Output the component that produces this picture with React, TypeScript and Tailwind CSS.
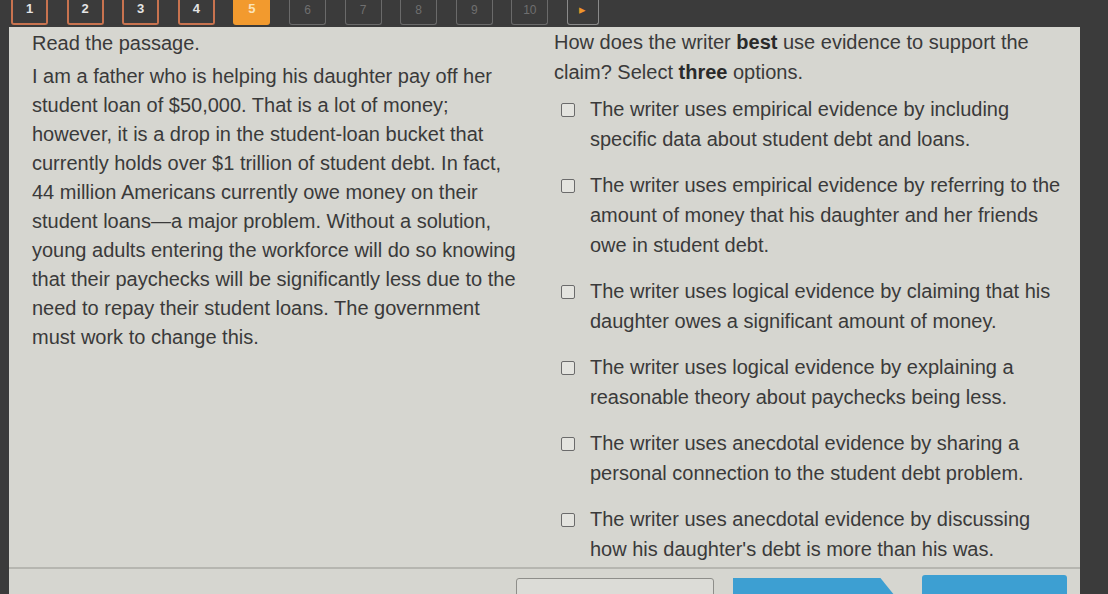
import React from "react";

const passage = [
  "I am a father who is helping his daughter pay off her",
  "student loan of $50,000. That is a lot of money;",
  "however, it is a drop in the student-loan bucket that",
  "currently holds over $1 trillion of student debt. In fact,",
  "44 million Americans currently owe money on their",
  "student loans\u2014a major problem. Without a solution,",
  "young adults entering the workforce will do so knowing",
  "that their paychecks will be significantly less due to the",
  "need to repay their student loans. The government",
  "must work to change this.",
];

const options: string[][] = [
  ["The writer uses empirical evidence by including", "specific data about student debt and loans."],
  [
    "The writer uses empirical evidence by referring to the",
    "amount of money that his daughter and her friends",
    "owe in student debt.",
  ],
  ["The writer uses logical evidence by claiming that his", "daughter owes a significant amount of money."],
  ["The writer uses logical evidence by explaining a", "reasonable theory about paychecks being less."],
  ["The writer uses anecdotal evidence by sharing a", "personal connection to the student debt problem."],
  ["The writer uses anecdotal evidence by discussing", "how his daughter's debt is more than his was."],
];

const PageBox: React.FC<{ n: number; state: "done" | "current" | "todo" }> = ({ n, state }) => {
  if (state === "current") {
    return (
      <div className="flex h-[25px] w-[37px] items-start justify-center rounded-b-[3px] bg-[#f29a2e] pt-[1px] text-[13px] font-bold leading-[16px] text-[#fbe3b8]">
        {n}
      </div>
    );
  }
  if (state === "done") {
    return (
      <div className="flex h-[25px] w-[37px] items-start justify-center rounded-b-[3px] border-2 border-t-0 border-[#c8734f] pt-[1px] text-[13px] font-bold leading-[16px] text-[#e4e4e4]">
        {n}
      </div>
    );
  }
  return (
    <div className="flex h-[25px] w-[37px] items-start justify-center rounded-b-[3px] border border-t-0 border-[#6a6a6a] pt-[2px] text-[12px] leading-[16px] text-[#6f6f6f]">
      {n}
    </div>
  );
};

const Option: React.FC<{ lines: string[] }> = ({ lines }) => (
  <div className="flex">
    <div className="mt-[9px] mr-[15px] h-[14px] w-[14px] shrink-0 rounded-[2px] border-[1.5px] border-[#6b6b6b] bg-[#e4e4df]" />
    <div>
      {lines.map((l) => (
        <div key={l} className="whitespace-nowrap leading-[30px]">
          {l}
        </div>
      ))}
    </div>
  </div>
);

const App: React.FC = () => {
  return (
    <div className="flex h-[594px] w-[1108px] flex-col overflow-hidden bg-[#3b3b3b] font-['Liberation_Sans',Arial,sans-serif] text-[20px] text-[#3a3a3a]">
      {/* question navigator */}
      <div className="flex h-[27px] shrink-0 gap-[18.6px] pl-[11px]">
        {[1, 2, 3, 4, 5, 6, 7, 8, 9, 10].map((n) => (
          <PageBox key={n} n={n} state={n < 5 ? "done" : n === 5 ? "current" : "todo"} />
        ))}
        <div className="flex h-[25px] w-[32px] items-start justify-center rounded-b-[3px] border border-t-0 border-[#8a8a8a] pt-[2px] text-[13px] leading-[16px] text-[#f0962a]">
          ▸
        </div>
      </div>

      {/* main panel */}
      <div className="ml-[9px] flex w-[1071px] flex-1 flex-col bg-[#d6d6d0]">
        <div className="flex h-[540px] shrink-0">
          <div className="w-[545px] shrink-0 pl-[23px] pt-[2px]">
            <div className="leading-[29px]">Read the passage.</div>
            <div className="mt-[4px]">
              {passage.map((l) => (
                <div key={l} className="whitespace-nowrap leading-[29px]">
                  {l}
                </div>
              ))}
            </div>
          </div>

          <div className="flex-1">
            <div className="leading-[30px]">
              <div>
                How does the writer <b className="text-[#2a2a2a]">best</b> use evidence to support the
              </div>
              <div>
                claim? Select <b className="text-[#2a2a2a]">three</b> options.
              </div>
            </div>
            <div className="mt-[7px] flex flex-col gap-[16px] pl-[7px]">
              {options.map((o) => (
                <Option key={o[0]} lines={o} />
              ))}
            </div>
          </div>
        </div>

        {/* footer buttons */}
        <div className="flex flex-1 items-start border-t-2 border-[#b6b6b0] pl-[507px]">
          <button className="mt-[9px] flex h-[40px] w-[198px] items-center justify-center rounded-[3px] border border-[#8e8e8a] bg-[#dcdcd7] pt-[30px] text-[15px] text-[#444]">
            Mark this and return
          </button>
          <button className="mt-[9px] ml-[19px] flex h-[40px] w-[162px] items-center justify-center bg-[#3d9fd2] pt-[30px] text-[15px] text-white [clip-path:polygon(0_0,91%_0,100%_45%,100%_100%,0_100%)]">
            Next
          </button>
          <button className="mt-[6px] ml-[27px] flex h-[44px] w-[145px] items-center justify-center rounded-[3px] bg-[#3d9fd2] pt-[30px] text-[15px] text-white">
            Submit
          </button>
        </div>
      </div>
    </div>
  );
};

export default App;
